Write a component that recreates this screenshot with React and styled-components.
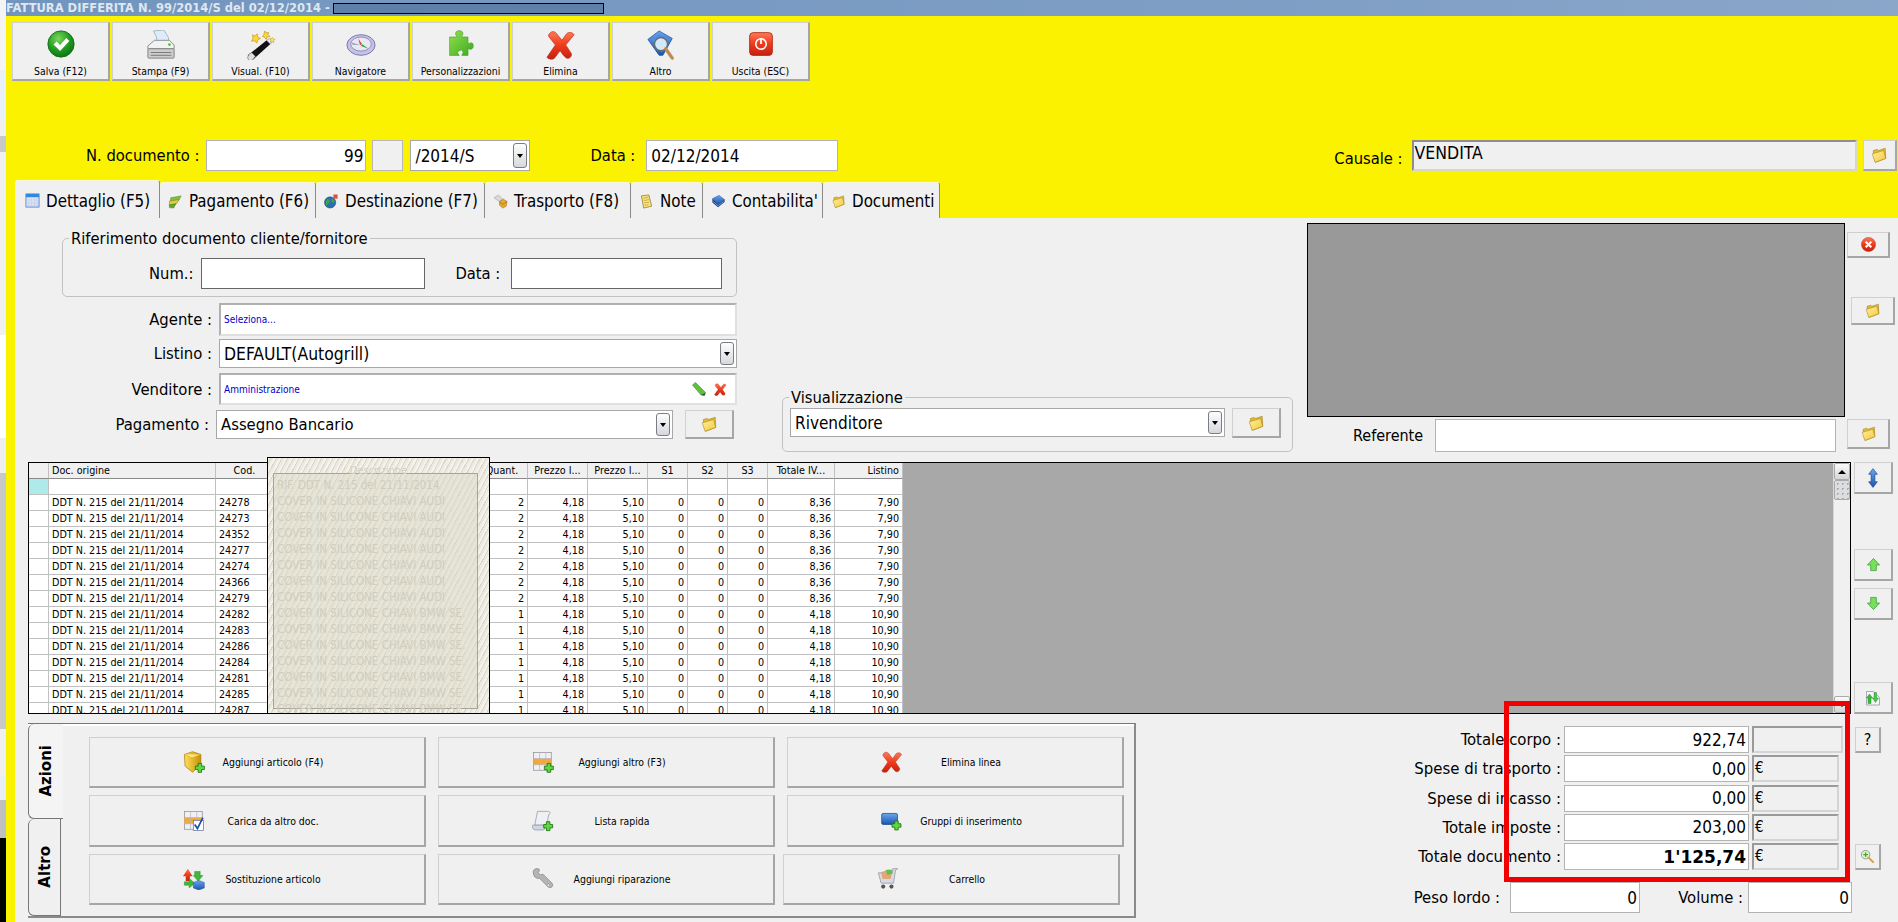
import React from 'react';
import styled, { createGlobalStyle, css } from 'styled-components';

const GlobalStyle = createGlobalStyle`
    html, body { margin: 0; padding: 0; background: #f0f0f0; }
    body {
        font-family: "DejaVu Sans", "Noto Sans", sans-serif;
        font-stretch: condensed;
        color: #000;
    }
    * { box-sizing: border-box; }
`;

const YELLOW = '#fbf200';
const PANEL = '#f0f0f0';

const raised = css`
    background: ${PANEL};
    border-top: 1px solid #d0d0d0;
    border-left: 1px solid #d0d0d0;
    border-right: 2px solid #a6a6a6;
    border-bottom: 2px solid #a6a6a6;
`;

const Screen = styled.div`
    width: 1898px;
    height: 922px;
    display: flex;
    overflow: hidden;
`;

const Behind = styled.div`
    width: 6px;
    display: flex;
    flex-direction: column;
`;

const BehindPiece = styled.div`
    height: ${p => p.$h}px;
    background: ${p => p.$c};
`;

const Main = styled.div`
    flex: 1;
    display: flex;
    flex-direction: column;
    min-width: 0;
`;

const TitleBar = styled.div`
    height: 16px;
    background: linear-gradient(90deg, #7295bf, #7d9dc4 60%, #8aa6c9);
    display: flex;
    align-items: center;
    color: #dfe7f1;
    font-size: 11.5px;
    font-stretch: normal;
    font-weight: 700;
    white-space: nowrap;
`;

const TitleMask = styled.div`
    width: 271px;
    height: 11px;
    margin-left: 3px;
    background: #5f80a8;
    border: 1px solid #000;
`;

const YellowArea = styled.div`
    height: 202px;
    background: ${YELLOW};
    padding-top: 6px;
`;

const Toolbar = styled.div`
    display: flex;
    gap: 2px;
    padding-left: 6px;
`;

const ToolButton = styled.button`
    ${raised}
    width: 98px;
    height: 59px;
    padding: 7px 0 2px;
    display: flex;
    flex-direction: column;
    align-items: center;
    justify-content: space-between;
    font: inherit;
    font-stretch: condensed;
    font-size: 10.4px;
    color: #000;
`;

const DocRow = styled.div`
    display: flex;
    align-items: stretch;
    height: 31px;
    margin-top: 59px;
    padding-left: 80px;
    font-size: 16.4px;
`;

const DocLabel = styled.span`
    display: flex;
    align-items: center;
    margin-left: ${p => p.$ml || 0}px;
    margin-right: ${p => p.$mr || 6}px;
    padding-top: ${p => p.$pt || 0}px;
    white-space: nowrap;
`;

const TextBox = styled.input`
    width: ${p => p.$w}px;
    height: ${p => (p.$h ? `${p.$h}px` : '100%')};
    margin: 0;
    padding: 0 2px 0 4px;
    background: #fff;
    border: 1px solid ${p => p.$line || '#b4b4b4'};
    border-radius: 0;
    outline: 0;
    font: inherit;
    font-stretch: ${p => (p.$bold ? 'normal' : 'condensed')};
    font-weight: ${p => (p.$bold ? 700 : 400)};
    font-size: ${p => p.$size || 17}px;
    color: #000;
    text-align: ${p => (p.$right ? 'right' : 'left')};
`;

const BlankButton = styled.button`
    ${raised}
    width: 31px;
    margin: 0 7px 0 6px;
    padding: 0;
    border-width: 1px;
    border-color: #b8b8b8;
`;

const Combo = styled.div`
    width: ${p => p.$w}px;
    height: ${p => p.$h || 29}px;
    display: flex;
    align-items: center;
    justify-content: space-between;
    padding: 2px 2px 2px 4px;
    background: #fff;
    border: 1px solid #a8a8a8;
    font-size: ${p => p.$size || 17}px;
    white-space: nowrap;
`;

const ComboArrow = styled.span`
    width: 14px;
    height: 100%;
    display: flex;
    align-items: center;
    justify-content: center;
    background: linear-gradient(#fdfdfd, #d6d8dc);
    border: 1px solid #7a7d85;
    border-radius: 3px;
    &::after {
        content: '';
        border-left: 3px solid transparent;
        border-right: 3px solid transparent;
        border-top: 4px solid #000;
    }
`;

const CausaleBox = styled.div`
    width: 445px;
    height: 100%;
    padding: 0 0 0 1px;
    background: ${PANEL};
    border-top: 2px solid #8e8e8e;
    border-left: 2px solid #8e8e8e;
    border-right: 2px solid #d8d8c0;
    border-bottom: 2px solid #d8d8c0;
    font-size: 17.5px;
    line-height: 22px;
`;

const IconButton = styled.button`
    ${raised}
    width: ${p => p.$w}px;
    height: ${p => p.$h}px;
    flex: none;
    margin-top: ${p => p.$mt || 0}px;
    margin-left: ${p => p.$ml || 0}px;
    padding: 0;
    display: flex;
    align-items: center;
    justify-content: center;
    font: inherit;
    font-stretch: condensed;
    font-size: 16px;
`;

const Tabs = styled.div`
    display: flex;
    align-items: flex-end;
    height: 38px;
    margin-top: 9px;
    padding-left: 9px;
`;

const Tab = styled.div`
    width: ${p => p.$w}px;
    height: ${p => (p.$active ? 38 : 36)}px;
    display: flex;
    align-items: center;
    gap: 6px;
    padding: ${p => (p.$active ? '2px 0 0 10px' : '1px 0 0 8px')};
    background: ${PANEL};
    border-top: 1px solid #f8f8d8;
    border-right: 1px solid #8a8a8a;
    border-radius: 3px 3px 0 0;
    font-size: 16.8px;
    white-space: nowrap;
`;

const Body = styled.div`
    flex: 1;
    display: flex;
    flex-direction: column;
    min-height: 0;
    background: ${PANEL};
    border-left: 9px solid ${YELLOW};
`;

const TopBlock = styled.div`
    height: 244px;
    display: flex;
`;

const Forms = styled.div`
    width: 722px;
    padding: 11px 0 0 47px;
`;

const Group = styled.fieldset`
    width: ${p => p.$w}px;
    height: ${p => p.$h}px;
    margin: 0;
    padding: 0;
    border: 1px solid #c2c2c2;
    border-radius: 5px;
`;

const GroupTitle = styled.legend`
    margin-left: 6px;
    padding: 0 2px;
    font-size: 16.4px;
`;

const RefRow = styled.div`
    display: flex;
    align-items: center;
    height: 31px;
    margin-top: 10px;
    padding-left: 86px;
    font-size: 16.4px;
`;

const FieldRow = styled.div`
    display: flex;
    align-items: center;
    height: ${p => p.$h}px;
    margin-top: ${p => p.$mt}px;
    font-size: 16.5px;
`;

const FieldLabel = styled.span`
    width: 150px;
    margin-right: ${p => p.$mr ?? 7}px;
    padding-right: ${p => 7 - (p.$mr ?? 7)}px;
    text-align: right;
    white-space: nowrap;
`;

const PickerBox = styled.div`
    width: 518px;
    height: 100%;
    display: flex;
    align-items: center;
    gap: 7px;
    padding: 0 8px 0 3px;
    background: #fff;
    border-top: 2px solid #b0b0b0;
    border-left: 2px solid #b0b0b0;
    border-right: 2px solid #e0e0e0;
    border-bottom: 2px solid #e0e0e0;
`;

const PickerText = styled.span`
    flex: 1;
    font-size: 10px;
    color: #0000c8;
`;

const VisBlock = styled.div`
    width: 511px;
    margin-left: 45px;
    align-self: flex-end;
    margin-bottom: 10px;
`;

const VisRow = styled.div`
    display: flex;
    align-items: flex-start;
    gap: 7px;
    padding: 1px 0 0 7px;
`;

const PreviewBlock = styled.div`
    width: 538px;
    margin-left: 14px;
    padding-top: 5px;
`;

const Preview = styled.div`
    height: 194px;
    background: #999;
    border: 1px solid #000;
`;

const ReferenteRow = styled.div`
    display: flex;
    align-items: center;
    height: 33px;
    margin-top: 2px;
    padding-left: 46px;
    font-size: 16px;
`;

const SideColumn = styled.div`
    width: 50px;
    margin-left: 2px;
    display: flex;
    flex-direction: column;
`;

const GridRow = styled.div`
    height: 252px;
    display: flex;
    padding-left: 13px;
`;

const GridFrame = styled.div`
    position: relative;
    width: 1823px;
    height: 252px;
    display: flex;
    border: 1px solid #000;
`;

const TableClip = styled.div`
    width: 874px;
    height: 100%;
    overflow: hidden;
    background: #fff;
`;

const GridTable = styled.table`
    width: 874px;
    table-layout: fixed;
    border-collapse: separate;
    border-spacing: 0;
    font-size: 10.7px;
`;

const HeadCell = styled.th`
    height: 16px;
    padding: 0 3px;
    background: ${PANEL};
    border-right: 1px solid #c0c0c0;
    border-bottom: 1px solid #8a8a8a;
    font-weight: 400;
    text-align: ${p => p.$align || 'center'};
    white-space: nowrap;
    overflow: hidden;
`;

const Cell = styled.td`
    height: 16px;
    padding: 0 3px;
    background: ${p => p.$marker ? '#aeeaea' : '#fff'};
    border-right: 1px solid #c0c0c0;
    border-bottom: 1px solid #c0c0c0;
    text-align: ${p => p.$align || 'left'};
    white-space: nowrap;
    overflow: hidden;
    line-height: 14px;
`;

const GridEmpty = styled.div`
    flex: 1;
    background: #a8a8a8;
`;

const ScrollBar = styled.div`
    width: 17px;
    display: flex;
    flex-direction: column;
    background: #f0f0f0;
    border-left: 1px solid #d8d8d8;
`;

const ScrollEnd = styled.div`
    height: 17px;
    display: flex;
    align-items: center;
    justify-content: center;
    background: linear-gradient(#fafafa, #d4d5d8);
    border: 1px solid #aaa;
    border-radius: 2px;
    &::after {
        content: '';
        border-left: 4px solid transparent;
        border-right: 4px solid transparent;
        ${p => p.$down ? 'border-top: 4px solid #000;' : 'border-bottom: 4px solid #000;'}
    }
`;

const ScrollThumb = styled.div`
    height: 20px;
    background: radial-gradient(circle, #aaa 1px, transparent 1px) 0 0 / 5px 5px, #dcdde0;
    border: 1px solid #aaa;
    border-radius: 2px;
`;

const ScrollTrack = styled.div`
    flex: 1;
`;

const Mask = styled.div`
    position: absolute;
    z-index: 2;
    left: 238px;
    top: -6px;
    width: 223px;
    height: 257px;
    padding: 15px 11px 4px 5px;
    overflow: hidden;
    background: repeating-linear-gradient(118deg, #f4f2ea 0 2px, #d9d7cb 2px 3px, #eceae0 3px 5px);
    border: 1px solid #000;
`;

const MaskCaption = styled.div`
    position: absolute;
    top: 6px;
    left: 0;
    width: 100%;
    text-align: center;
    font-size: 11px;
    color: #d2d0c3;
`;

const MaskInner = styled.div`
    height: 100%;
    padding-top: 3px;
    background: repeating-linear-gradient(118deg, #e8e6d9 0 2px, #dad8ca 2px 3px, #e3e1d3 3px 5px);
    border: 1px solid #a5a497;
`;

const MaskLine = styled.div`
    height: 16px;
    padding-left: 3px;
    font-size: 11.5px;
    line-height: 16px;
    color: #cfcdbd;
    white-space: nowrap;
    overflow: hidden;
`;

const GridSide = styled.div`
    width: 42px;
    margin-left: 3px;
    display: flex;
    flex-direction: column;
`;

const BottomRow = styled.div`
    position: relative;
    flex: 1;
    display: flex;
    padding: 9px 0 0 13px;
`;

const ActionPanel = styled.div`
    width: 1108px;
    height: 195px;
    display: flex;
    background: ${PANEL};
    border-top: 1px solid #777;
    border-right: 2px solid #8a8a8a;
    border-bottom: 2px solid #8a8a8a;
    box-shadow: inset 0 2px 0 #fff;
`;

const SideTabs = styled.div`
    width: 61px;
    display: flex;
    flex-direction: column;
`;

const SideTab = styled.div`
    width: ${p => (p.$active ? 35 : 33)}px;
    height: ${p => (p.$active ? 95 : 98)}px;
    display: flex;
    align-items: center;
    justify-content: center;
    background: ${p => (p.$active ? '#f4f4f4' : PANEL)};
    border-left: 1px solid #777;
    border-right: ${p => (p.$active ? '0' : '1px solid #777')};
    border-bottom: 1px solid #777;
    border-radius: 6px 0 0 6px;
    span {
        writing-mode: vertical-rl;
        transform: rotate(180deg);
        font-size: 15px;
        font-stretch: normal;
        font-weight: ${p => (p.$active ? 700 : 600)};
    }
`;

const ActionRows = styled.div`
    display: flex;
    flex-direction: column;
    gap: 7px;
    padding-top: 13px;
`;

const ActionRow = styled.div`
    display: flex;
    gap: 12px;
`;

const ActionButton = styled.button`
    ${raised}
    width: 337px;
    height: ${p => p.$h || 51}px;
    margin-left: ${p => p.$shift || 0}px;
    padding: 0 0 0 93px;
    display: flex;
    align-items: center;
    font: inherit;
    font-stretch: condensed;
    font-size: 10.4px;
    color: #000;
`;

const ActionLabel = styled.span`
    width: 136px;
    text-align: center;
    white-space: nowrap;
`;

const Totals = styled.div`
    width: 500px;
    margin-left: 248px;
    padding-top: 3px;
    display: flex;
    flex-direction: column;
    gap: 2.25px;
`;

const TotalRow = styled.div`
    height: 27px;
    display: flex;
    align-items: center;
    font-size: 16.6px;
`;

const TotalLabel = styled.span`
    width: 177px;
    margin-right: 3px;
    text-align: right;
    white-space: nowrap;
`;

const UnitBox = styled.div`
    width: ${p => p.$w}px;
    height: 27px;
    margin-left: 3px;
    padding-left: 1px;
    background: ${PANEL};
    border-top: 2px solid #9a9a9a;
    border-left: 2px solid #9a9a9a;
    border-right: 2px solid #d4d4d4;
    border-bottom: 2px solid #d4d4d4;
    font-size: 15px;
    line-height: 22px;
`;

const PesoRow = styled.div`
    height: 31px;
    margin-top: 10px;
    display: flex;
    align-items: center;
    font-size: 16.5px;
`;

const PesoLabel = styled.span`
    width: ${p => p.$w}px;
    margin-right: ${p => p.$mr}px;
    text-align: right;
    white-space: nowrap;
`;

const RedFrame = styled.div`
    position: absolute;
    z-index: 3;
    left: 1489px;
    top: -13px;
    width: 346px;
    height: 181px;
    border: 5px solid #f00000;
    pointer-events: none;
`;

// ---- drawings ----

const SvgBase = styled.svg`
    flex: none;
`;

const Svg = ({ s = 16, children }) => (
    <SvgBase width={s} height={s} viewBox="0 0 32 32">{children}</SvgBase>
);

const Defs = styled.svg`
    position: absolute;
    width: 0;
    height: 0;
`;

const SharedGradients = () => (
    <Defs>
        <defs>
            <radialGradient id="gGreen" cx="0.4" cy="0.3" r="0.8">
                <stop offset="0" stopColor="#7bd65c" />
                <stop offset="0.55" stopColor="#1f9a1f" />
                <stop offset="1" stopColor="#0b6a12" />
            </radialGradient>
            <linearGradient id="gRed" x1="0" y1="0" x2="0" y2="1">
                <stop offset="0" stopColor="#ff7a55" />
                <stop offset="0.5" stopColor="#ee3a1d" />
                <stop offset="1" stopColor="#c4210e" />
            </linearGradient>
            <linearGradient id="gFolder" x1="0" y1="0" x2="1" y2="1">
                <stop offset="0" stopColor="#fff0a0" />
                <stop offset="1" stopColor="#f3c93a" />
            </linearGradient>
            <linearGradient id="gPuzzle" x1="0" y1="0" x2="1" y2="1">
                <stop offset="0" stopColor="#8fe34e" />
                <stop offset="1" stopColor="#3ea81f" />
            </linearGradient>
            <linearGradient id="gCube" x1="0" y1="0" x2="1" y2="0">
                <stop offset="0" stopColor="#ffe05c" />
                <stop offset="1" stopColor="#c78f06" />
            </linearGradient>
            <linearGradient id="gBlue" x1="0" y1="0" x2="0" y2="1">
                <stop offset="0" stopColor="#6aa6ef" />
                <stop offset="1" stopColor="#1a55ae" />
            </linearGradient>
        </defs>
    </Defs>
);

const GreenPlus = ({ x = 18, y = 18 }) => (
    <path transform={`translate(${x} ${y})`} d="M4 0h5v4h4v5H9v4H4V9H0V4h4z" fill="#62d63f" stroke="#1c7a12" strokeWidth="1.3" />
);

const CheckIcon = ({ s }) => (
    <Svg s={s}>
        <circle cx="16" cy="16" r="15" fill="url(#gGreen)" stroke="#0e6a14" />
        <path d="M7.5 16.5l3.5-3.5 4 4 7-8 3.5 3.5-10.5 11.5z" fill="#fff" />
    </Svg>
);

const PrinterIcon = ({ s }) => (
    <Svg s={s}>
        <path d="M8 1l11-1 5 8 0 6H12l-1-7z" fill="#dcecfb" stroke="#8a9cb0" strokeWidth=".7" />
        <path d="M2 17l7-6h16l5 5v4H2z" fill="#f2f2f2" stroke="#8a8a8a" />
        <rect x="2" y="20" width="28" height="10" rx="1" fill="#cdcdcd" stroke="#808080" />
        <path d="M5 24h22M5 27h22" stroke="#777" />
        <circle cx="25" cy="15.500" r="1.500" fill="#53c23a" />
    </Svg>
);

const WandIcon = ({ s }) => (
    <Svg s={s}>
        <path d="M2 27l20-16 4 4-19 17z" fill="#111" />
        <path d="M2 27l4-3 4 4-3 4a3 3 0 0 1-4-5z" fill="#dcdcdc" stroke="#666" strokeWidth=".6" />
        <path d="M22 11l3-2 3 3-2 3z" fill="#e8e8e8" stroke="#888" strokeWidth=".6" />
        <path d="M7 5l2.500 1.500L12 4l.5 3.500 3 1.500-3 1.500-1 3.500-2-2.500-3.500.5 1.500-3.500z" fill="#ffd634" stroke="#b48a10" strokeWidth=".6" />
        <path d="M20 1l1.500 2 2.500-.5-.5 2.500 2 2-3 .5-1 2.500-1.500-2.500-2.500-.5 1.500-2z" fill="#ffd634" stroke="#b48a10" strokeWidth=".6" />
        <path d="M28 8l1 1.500 2 .5-1.500 1.500 0 2-1.500-1-2 .5.500-2-1-1.500 2-.5z" fill="#ffe46a" stroke="#b48a10" strokeWidth=".5" />
    </Svg>
);

const CompassIcon = ({ s }) => (
    <Svg s={s}>
        <ellipse cx="16" cy="16" rx="15" ry="11" fill="#c5c2e8" stroke="#7672aa" />
        <ellipse cx="16" cy="15" rx="11" ry="7.500" fill="#e8e8f0" stroke="#8e8ab8" />
        <path d="M13 9l4 6-2 1z" fill="#e23a2c" />
        <path d="M17 15l7 5-8-3z" fill="#3aa34a" />
        <path d="M6 13l9 3-8 0z" fill="#a9a9c4" />
    </Svg>
);

const PuzzleIcon = ({ s }) => (
    <Svg s={s}>
        <path d="M3 8h8c1-1-2-2-1-5 1-3 7-3 8 0 .8 3-2 4-1 5h7v7c2 1 3-1 5 0 2 2 1 7-2 7-2 0-2-1-3-1v8h-7c0-2 2-2 1-5-2-2-5 0-6 2l2 3H3z" fill="url(#gPuzzle)" stroke="#4a9a22" strokeWidth=".7" />
    </Svg>
);

const RedXIcon = ({ s }) => (
    <Svg s={s}>
        <path d="M6 2c3-1 5 1 7 4l4 5 5-7c2-2 6-2 8 1l-9 11 6 9c1 3-2 6-5 5-2-1-5-5-7-8l-6 8c-2 2-7 1-8-1l9-13L3 7c-1-2 1-4 3-5z" fill="url(#gRed)" stroke="#b8290f" strokeWidth=".7" />
    </Svg>
);

const BookIcon = ({ s }) => (
    <Svg s={s}>
        <path d="M2 10L14 1l14 8-10 18h-4z" fill="url(#gBlue)" stroke="#123f8c" strokeWidth=".7" />
        <path d="M6 10l8-6 11 6-8 14z" fill="#4f8fe0" />
        <circle cx="16" cy="15" r="7" fill="#d4e8f8" stroke="#6a6a70" strokeWidth="1.500" />
        <path d="M21 20l7 10" stroke="#c08a50" strokeWidth="3.500" strokeLinecap="round" />
    </Svg>
);

const PowerIcon = ({ s }) => (
    <Svg s={s}>
        <rect x="3" y="3" width="26" height="26" rx="4" fill="url(#gRed)" stroke="#b02a10" />
        <circle cx="16" cy="16" r="6" fill="none" stroke="#fff" strokeWidth="1.800" />
        <path d="M16 10v6" stroke="#fff" strokeWidth="2" />
    </Svg>
);

const FolderIcon = ({ s }) => (
    <Svg s={s}>
        <path d="M6 14V8l7-2 2 2 12-4 1 18-18 7z" fill="#e7b92e" stroke="#9c7a18" />
        <path d="M4 14l20-6 4 14-19 7z" fill="url(#gFolder)" stroke="#a88420" />
    </Svg>
);

const WindowIcon = ({ s }) => (
    <Svg s={s}>
        <rect x="2" y="2" width="28" height="28" fill="#dfe6f6" stroke="#2a6ac8" strokeWidth="1.500" />
        <rect x="2" y="2" width="28" height="7" fill="#2f8ae0" />
        <path d="M8 9v21M14 9v21M20 9v21M26 9v21M2 15h28M2 21h28M2 26h28" stroke="#b8c4dc" />
    </Svg>
);

const MoneyIcon = ({ s }) => (
    <Svg s={s}>
        <path d="M6 8l22-4-5 10-18 3z" fill="#7cc23c" stroke="#3c7a18" />
        <path d="M3 15l20-3-4 8-16 4z" fill="#e8c83c" stroke="#8a7212" />
        <path d="M3 23l14-2-5 9-9-1z" fill="#5aa82c" stroke="#3c7a18" />
    </Svg>
);

const GlobeIcon = ({ s }) => (
    <Svg s={s}>
        <circle cx="13" cy="18" r="12" fill="#2a6fb0" stroke="#123a60" />
        <path d="M6 12c4-2 7 1 6 5s-5 4-6 9c-3-4-3-10 0-14zM16 10c3 0 6 3 7 6l-4 3c-3-2-4-6-3-9z" fill="#3aa648" />
        <path d="M20 1h9v9h-9z" fill="#e0503a" />
    </Svg>
);

const ParcelIcon = ({ s }) => (
    <Svg s={s}>
        <path d="M2 8l10-6 9 9-8 5z" fill="#d8d8d8" stroke="#999" />
        <path d="M14 16l8-5 8 5-2 10-7 4-7-6z" fill="#e8aa28" stroke="#8a5e10" />
        <path d="M14 17l7 5 9-6" fill="none" stroke="#7a5008" />
    </Svg>
);

const NoteIcon = ({ s }) => (
    <Svg s={s}>
        <path d="M5 4l16-2 6 24-17 4z" fill="#fbe27a" stroke="#8a7426" strokeWidth="1.500" />
        <path d="M9 9l11-2M10 14l11-2M11 19l11-2M12 24l8-1" stroke="#8a7426" />
    </Svg>
);

const LedgerIcon = ({ s }) => (
    <Svg s={s}>
        <path d="M3 10L17 3l12 9-14 10z" fill="url(#gBlue)" stroke="#0e3a80" />
        <path d="M3 10v8l12 10 14-11v-5L15 22z" fill="#12408c" />
        <path d="M5 16l10 9 12-9" fill="none" stroke="#fff" />
    </Svg>
);

const CircleXIcon = ({ s }) => (
    <Svg s={s}>
        <circle cx="16" cy="16" r="15" fill="url(#gRed)" stroke="#a82410" />
        <path d="M10 10l12 12M22 10L10 22" stroke="#fff" strokeWidth="4.500" />
    </Svg>
);

const PencilIcon = ({ s }) => (
    <Svg s={s}>
        <path d="M3 8l6-5 20 20-2 6-7-1z" fill="#5fc23c" stroke="#2c7a18" />
        <path d="M20 28l7 1 2-6-3 2z" fill="#444" />
    </Svg>
);

const UpDownIcon = ({ s }) => (
    <Svg s={s}>
        <path d="M16 1l7 9h-4v12h4l-7 9-7-9h4V10H9z" fill="url(#gBlue)" stroke="#123f8c" />
    </Svg>
);

const ArrowIcon = ({ s, down }) => (
    <Svg s={s}>
        <path
            d={down ? 'M10 3h12v12h7L16 29 3 15h7z' : 'M16 3l13 14h-7v12H10V17H3z'}
            fill="#78e05c"
            stroke="#2f9a2a"
            strokeWidth="1.500"
        />
    </Svg>
);

const SwapIcon = ({ s }) => (
    <Svg s={s}>
        <path d="M3 3h14l12 12v15H3z" fill="#f4f6fa" stroke="#8a94a8" strokeWidth="1.500" />
        <path d="M6 27V16H3l6-8 6 8h-3v11z" fill="#3fb83a" stroke="#1c7a18" strokeWidth=".8" />
        <path d="M23 5v11h4l-6 9-6-9h3V5z" fill="#4cc84a" stroke="#1c7a18" strokeWidth=".8" />
    </Svg>
);

const ZoomIcon = ({ s }) => (
    <Svg s={s}>
        <circle cx="12" cy="12" r="9" fill="#dff3d8" stroke="#6a8a60" strokeWidth="1.500" />
        <path d="M12 7v10M7 12h10" stroke="#3aa62a" strokeWidth="2.500" />
        <path d="M18 18l10 10" stroke="#d8984a" strokeWidth="4" strokeLinecap="round" />
    </Svg>
);

const CubePlusIcon = ({ s }) => (
    <Svg s={s}>
        <path d="M2 5l12-4 12 4v14l-12 12L3 22z" fill="url(#gCube)" stroke="#a87a08" />
        <path d="M2 5l11 5 13-5" fill="#ffe97a" stroke="#c89a10" strokeWidth=".7" />
        <GreenPlus />
    </Svg>
);

const TableBase = () => (
    <>
        <rect x="2" y="2" width="26" height="26" fill="#eef0f6" stroke="#8a8a90" />
        <rect x="2" y="11" width="26" height="9" fill="#f4a83c" />
        <path d="M11 2v26M20 2v26M2 11h26M2 20h26" stroke="#b4b4bc" />
    </>
);

const TablePlusIcon = ({ s }) => (
    <Svg s={s}><TableBase /><GreenPlus /></Svg>
);

const TableCheckIcon = ({ s }) => (
    <Svg s={s}>
        <TableBase />
        <rect x="15" y="15" width="15" height="15" fill="#fff" stroke="#5a6a90" />
        <path d="M17 21l4 6 8-16" fill="none" stroke="#1c4fb0" strokeWidth="2.500" />
    </Svg>
);

const ScrollIcon = ({ s }) => (
    <Svg s={s}>
        <path d="M8 2h16c3 0 3 5 0 5l-2 15H4z" fill="#eef0f4" stroke="#8a90a0" />
        <path d="M1 22h16c2 1 2 6 0 7H5c-4 0-5-5-4-7z" fill="#d0d6e2" stroke="#8a90a0" />
        <GreenPlus x={17} y={17} />
    </Svg>
);

const GroupPlusIcon = ({ s }) => (
    <Svg s={s}>
        <rect x="1" y="5" width="23" height="16" rx="2" fill="url(#gBlue)" stroke="#123f8c" />
        <GreenPlus x={16} y={16} />
    </Svg>
);

const SwapBoxesIcon = ({ s }) => (
    <Svg s={s}>
        <path d="M7 1l7 11H10v7H4v-7H0z" fill="url(#gRed)" />
        <path d="M17 5h8v6h4l-7 8-7-8h2z" fill="#3fb83a" stroke="#1c7a18" strokeWidth=".6" />
        <path d="M2 20h7v-5l8 7-8 7v-4H2z" fill="#3fb83a" stroke="#1c7a18" strokeWidth=".6" />
        <path d="M15 21l8-3 8 3v8l-8 3-8-3z" fill="url(#gBlue)" stroke="#123f8c" strokeWidth=".6" />
    </Svg>
);

const WrenchIcon = ({ s }) => (
    <Svg s={s}>
        <path d="M2 4C4 0 10 0 11 3l-2 4 3 3 4-1 13 13c3 4-1 8-5 6L11 15c-4 1-10-2-9-11z" fill="#b4b4b4" stroke="#7c7c7c" />
        <circle cx="24" cy="25" r="2" fill="#f0f0f0" stroke="#888" />
    </Svg>
);

const CartIcon = ({ s }) => (
    <Svg s={s}>
        <path d="M23 1h7l-3 2-3 19H6L2 7h20z" fill="#d9dbe4" stroke="#8a8c98" />
        <path d="M6 6l10-4 6 4-2 10H8z" fill="#e0a87a" />
        <path d="M13 3l8-1 2 6-8 2z" fill="#62c04a" />
        <circle cx="9" cy="27" r="3" fill="#555" />
        <circle cx="21" cy="27" r="3" fill="#555" />
    </Svg>
);

// ---- data ----

const behindPieces = [
    [70, '#f4f4f4'], [50, '#eaf0f8'], [16, '#f0f0f0'], [16, '#c8c8c8'], [183, '#f0f0f0'], [103, '#ffffff'],
    [35, '#eeeeee'], [256, '#c8c8c8'], [47, '#f0f0f0'], [24, '#e8eef4'], [38, '#c0c0c0'], [84, '#000000'],
];

const toolButtons = [
    { label: 'Salva (F12)', Icon: CheckIcon, size: 28 },
    { label: 'Stampa (F9)', Icon: PrinterIcon, size: 30 },
    { label: 'Visual. (F10)', Icon: WandIcon, size: 30 },
    { label: 'Navigatore', Icon: CompassIcon, size: 30 },
    { label: 'Personalizzazioni', Icon: PuzzleIcon, size: 28 },
    { label: 'Elimina', Icon: RedXIcon, size: 30 },
    { label: 'Altro', Icon: BookIcon, size: 30 },
    { label: 'Uscita (ESC)', Icon: PowerIcon, size: 28 },
];

const tabs = [
    { label: 'Dettaglio (F5)', Icon: WindowIcon, w: 145, active: true },
    { label: 'Pagamento (F6)', Icon: MoneyIcon, w: 156 },
    { label: 'Destinazione (F7)', Icon: GlobeIcon, w: 169 },
    { label: 'Trasporto (F8)', Icon: ParcelIcon, w: 146 },
    { label: 'Note', Icon: NoteIcon, w: 72 },
    { label: "Contabilita'", Icon: LedgerIcon, w: 120 },
    { label: 'Documenti', Icon: FolderIcon, w: 117 },
];

const columns = [
    { label: '', w: 20 },
    { label: 'Doc. origine', w: 167, align: 'left' },
    { label: 'Cod.', w: 58 },
    { label: 'Descrizione', w: 203 },
    { label: 'Quant.', w: 51 },
    { label: 'Prezzo I...', w: 60 },
    { label: 'Prezzo I...', w: 60 },
    { label: 'S1', w: 40 },
    { label: 'S2', w: 40 },
    { label: 'S3', w: 40 },
    { label: 'Totale IV...', w: 67 },
    { label: 'Listino', w: 68, align: 'right' },
];

const codes = [24278, 24273, 24352, 24277, 24274, 24366, 24279, 24282, 24283, 24286, 24284, 24281, 24285, 24287];

const maskLines = [
    'RIF. DDT N. 215 del 21/11/2014',
    ...codes.slice(0, 7).map(() => 'COVER IN SILICONE CHIAVI AUDI'),
    ...codes.slice(7).map(() => 'COVER IN SILICONE CHIAVI BMW SE.'),
];

const actions = [
    [
        { label: 'Aggiungi articolo (F4)', Icon: CubePlusIcon },
        { label: 'Aggiungi altro (F3)', Icon: TablePlusIcon },
        { label: 'Elimina linea', Icon: RedXIcon },
    ],
    [
        { label: 'Carica da altro doc.', Icon: TableCheckIcon },
        { label: 'Lista rapida', Icon: ScrollIcon },
        { label: 'Gruppi di inserimento', Icon: GroupPlusIcon },
    ],
    [
        { label: 'Sostituzione articolo', Icon: SwapBoxesIcon },
        { label: 'Aggiungi riparazione', Icon: WrenchIcon },
        { label: 'Carrello', Icon: CartIcon, shift: -4 },
    ],
];

const totals = [
    { label: 'Totale corpo :', value: '922,74', unit: '', unitW: 91, side: '?' },
    { label: 'Spese di trasporto :', value: '0,00', unit: '€', unitW: 87 },
    { label: 'Spese di incasso :', value: '0,00', unit: '€', unitW: 87 },
    { label: 'Totale imposte :', value: '203,00', unit: '€', unitW: 87 },
    { label: 'Totale documento :', value: "1'125,74", unit: '€', unitW: 87, bold: true, side: 'zoom' },
];

function GridBody() {
    return (
        <tbody>
            <tr>
                {columns.map((c, i) => <Cell key={i} $marker={i === 0} />)}
            </tr>
            {codes.map((code, i) => {
                const two = i < 7;
                const q = two ? 2 : 1;
                return (
                    <tr key={code}>
                        <Cell />
                        <Cell>DDT N. 215 del 21/11/2014</Cell>
                        <Cell>{code}</Cell>
                        <Cell />
                        <Cell $align="right">{q}</Cell>
                        <Cell $align="right">4,18</Cell>
                        <Cell $align="right">5,10</Cell>
                        <Cell $align="right">0</Cell>
                        <Cell $align="right">0</Cell>
                        <Cell $align="right">0</Cell>
                        <Cell $align="right">{two ? '8,36' : '4,18'}</Cell>
                        <Cell $align="right">{two ? '7,90' : '10,90'}</Cell>
                    </tr>
                );
            })}
        </tbody>
    );
}

export default function App() {
    return (
        <Screen>
            <GlobalStyle />
            <SharedGradients />
            <Behind>
                {behindPieces.map(([h, c], i) => <BehindPiece key={i} $h={h} $c={c} />)}
            </Behind>
            <Main>
                <TitleBar>
                    FATTURA DIFFERITA N. 99/2014/S del 02/12/2014 -
                    <TitleMask />
                </TitleBar>

                <YellowArea>
                    <Toolbar>
                        {toolButtons.map(({ label, Icon, size }) => (
                            <ToolButton key={label}>
                                <Icon s={size} />
                                {label}
                            </ToolButton>
                        ))}
                    </Toolbar>

                    <DocRow>
                        <DocLabel $mr={7}>N. documento :</DocLabel>
                        <TextBox $w={160} $right readOnly value="99" />
                        <BlankButton />
                        <Combo $w={120} $h={31}>/2014/S<ComboArrow /></Combo>
                        <DocLabel $ml={60} $mr={11}>Data :</DocLabel>
                        <TextBox $w={192} readOnly value="02/12/2014" />
                        <DocLabel $ml={496} $mr={9} $pt={6}>Causale :</DocLabel>
                        <CausaleBox>VENDITA</CausaleBox>
                        <IconButton $w={34} $h={31} $ml={6}><FolderIcon s={18} /></IconButton>
                    </DocRow>

                    <Tabs>
                        {tabs.map(({ label, Icon, w, active }) => (
                            <Tab key={label} $w={w} $active={active}>
                                <Icon s={15} />
                                {label}
                            </Tab>
                        ))}
                    </Tabs>
                </YellowArea>

                <Body>
                    <TopBlock>
                        <Forms>
                            <Group $w={675} $h={68}>
                                <GroupTitle>Riferimento documento cliente/fornitore</GroupTitle>
                                <RefRow>
                                    <DocLabel $mr={8}>Num.:</DocLabel>
                                    <TextBox $w={224} $line="#666" />
                                    <DocLabel $ml={30} $mr={11}>Data :</DocLabel>
                                    <TextBox $w={211} $line="#666" />
                                </RefRow>
                            </Group>
                            <FieldRow $h={33} $mt={6}>
                                <FieldLabel>Agente :</FieldLabel>
                                <PickerBox><PickerText>Seleziona...</PickerText></PickerBox>
                            </FieldRow>
                            <FieldRow $h={29} $mt={3}>
                                <FieldLabel>Listino :</FieldLabel>
                                <Combo $w={518} $size={17.4}>DEFAULT(Autogrill)<ComboArrow /></Combo>
                            </FieldRow>
                            <FieldRow $h={32} $mt={5}>
                                <FieldLabel>Venditore :</FieldLabel>
                                <PickerBox>
                                    <PickerText>Amministrazione</PickerText>
                                    <PencilIcon s={16} />
                                    <RedXIcon s={13} />
                                </PickerBox>
                            </FieldRow>
                            <FieldRow $h={29} $mt={5}>
                                <FieldLabel $mr={4}>Pagamento :</FieldLabel>
                                <Combo $w={457} $size={16.5}>Assegno Bancario<ComboArrow /></Combo>
                                <IconButton $w={49} $h={29} $ml={12}><FolderIcon s={18} /></IconButton>
                            </FieldRow>
                        </Forms>

                        <VisBlock>
                            <Group $w={511} $h={64}>
                                <GroupTitle>Visualizzazione</GroupTitle>
                                <VisRow>
                                    <Combo $w={435}>Rivenditore<ComboArrow /></Combo>
                                    <IconButton $w={49} $h={30}><FolderIcon s={18} /></IconButton>
                                </VisRow>
                            </Group>
                        </VisBlock>

                        <PreviewBlock>
                            <Preview />
                            <ReferenteRow>
                                <DocLabel $mr={12}>Referente</DocLabel>
                                <TextBox $w={401} />
                            </ReferenteRow>
                        </PreviewBlock>

                        <SideColumn>
                            <IconButton $w={43} $h={26} $mt={14}><CircleXIcon s={15} /></IconButton>
                            <IconButton $w={44} $h={28} $mt={39} $ml={4}><FolderIcon s={17} /></IconButton>
                            <IconButton $w={43} $h={30} $mt={94}><FolderIcon s={17} /></IconButton>
                        </SideColumn>
                    </TopBlock>

                    <GridRow>
                        <GridFrame>
                            <TableClip>
                                <GridTable>
                                    <colgroup>
                                        {columns.map((c, i) => <col key={i} width={c.w} />)}
                                    </colgroup>
                                    <thead>
                                        <tr>
                                            {columns.map((c, i) => (
                                                <HeadCell key={i} $align={c.align}>{i === 3 ? '' : c.label}</HeadCell>
                                            ))}
                                        </tr>
                                    </thead>
                                    <GridBody />
                                </GridTable>
                            </TableClip>
                            <GridEmpty />
                            <ScrollBar>
                                <ScrollEnd />
                                <ScrollThumb />
                                <ScrollTrack />
                                <ScrollEnd $down />
                            </ScrollBar>
                            <Mask>
                                <MaskCaption>Descrizione</MaskCaption>
                                <MaskInner>
                                    {maskLines.map((line, i) => <MaskLine key={i}>{line}</MaskLine>)}
                                </MaskInner>
                            </Mask>
                        </GridFrame>
                        <GridSide>
                            <IconButton $w={39} $h={32}><UpDownIcon s={20} /></IconButton>
                            <IconButton $w={39} $h={32} $mt={55}><ArrowIcon s={15} /></IconButton>
                            <IconButton $w={39} $h={32} $mt={7}><ArrowIcon s={15} down /></IconButton>
                            <IconButton $w={39} $h={32} $mt={62}><SwapIcon s={16} /></IconButton>
                        </GridSide>
                    </GridRow>

                    <BottomRow>
                        <ActionPanel>
                            <SideTabs>
                                <SideTab $active><span>Azioni</span></SideTab>
                                <SideTab><span>Altro</span></SideTab>
                            </SideTabs>
                            <ActionRows>
                                {actions.map((row, r) => (
                                    <ActionRow key={r}>
                                        {row.map(({ label, Icon, shift }) => (
                                            <ActionButton key={label} $h={r === 1 ? 52 : 51} $shift={shift}>
                                                <Icon s={22} />
                                                <ActionLabel>{label}</ActionLabel>
                                            </ActionButton>
                                        ))}
                                    </ActionRow>
                                ))}
                            </ActionRows>
                        </ActionPanel>

                        <Totals>
                            {totals.map(t => (
                                <TotalRow key={t.label}>
                                    <TotalLabel>{t.label}</TotalLabel>
                                    <TextBox $w={185} $h={27} $right $bold={t.bold} readOnly value={t.value} />
                                    <UnitBox $w={t.unitW}>{t.unit}</UnitBox>
                                    {t.side === '?' && <IconButton $w={26} $h={26} $ml={12}>?</IconButton>}
                                    {t.side === 'zoom' && <IconButton $w={26} $h={26} $ml={16}><ZoomIcon s={15} /></IconButton>}
                                </TotalRow>
                            ))}
                            <PesoRow>
                                <PesoLabel $w={116} $mr={10}>Peso lordo :</PesoLabel>
                                <TextBox $w={130} $right readOnly value="0" />
                                <PesoLabel $w={103} $mr={5}>Volume :</PesoLabel>
                                <TextBox $w={104} $right readOnly value="0" />
                            </PesoRow>
                        </Totals>
                        <RedFrame />
                    </BottomRow>
                </Body>
            </Main>
        </Screen>
    );
}
